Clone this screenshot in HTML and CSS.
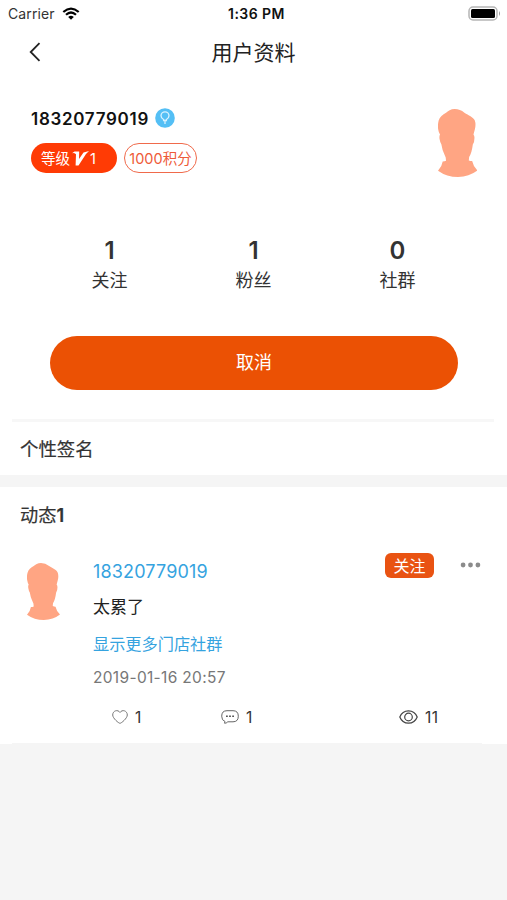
FILE: index.html
```html
<!DOCTYPE html>
<html lang="zh-CN">
<head>
<meta charset="utf-8">
<title>用户资料</title>
<link rel="stylesheet" href="styles.css">
</head>
<body>
<svg class="defs" width="0" height="0">
  <symbol id="avatar" viewBox="12 15 118 205" preserveAspectRatio="none">
    <path d="M62 15C50 15 42 21 36 26C26 32 17 38 14 50Q10 66 13 78Q14 86 18 92Q15 97 17 107Q18 115 22 121Q25 139 30 149L35 161L36 171Q32 173 26 173Q24 188 12 201Q38 220 72 220Q106 219 130 200Q118 190 114 172Q109 172 104 170L105 160Q113 147 116 122Q121 115 121 102Q121 96 118 92L122 77Q126 62 122 50C117 38 103 34 91 26Q78 15 62 15Z" fill="#ffa583"/>
  </symbol>
</svg>
<main class="page">
  <header class="status">
    <div class="carrier"><span>Carrier</span>
      <svg class="wifi" viewBox="0 0 18 13"><path d="M1.3 5Q9-1.8 16.7 5M4 7.8Q9 3.2 14 7.8" fill="none" stroke="#000" stroke-width="2.2"/><path d="M6.2 10Q9 7.7 11.8 10L9 12.8Z"/></svg>
    </div>
    <div class="time">1:36 PM</div>
    <svg class="battery" viewBox="0 0 33 15"><rect x="1" y="1" width="28" height="13" rx="4" fill="none" stroke="#b5b5b5" stroke-width="1.5"/><rect x="3" y="3" width="24" height="9" rx="1.5"/><path d="M31 5q2 2.5 0 5z" fill="#999"/></svg>
  </header>
  <nav class="nav">
    <svg class="back" viewBox="0 0 12 20"><path d="M10.5 1.2L1.7 10L10.5 18.8" fill="none" stroke="#222" stroke-width="1.8"/></svg>
    <h1>用户资料</h1>
  </nav>
  <section class="profile">
    <div>
      <div class="name"><span>18320779019</span>
        <svg class="bulb" viewBox="0 0 20 20"><circle cx="10" cy="10" r="9.8" fill="#54bff5"/><path d="M8.6 12.5V11.5Q6 10.2 6 7.8A4 4 0 0 1 14 7.8Q14 10.2 11.4 11.5V12.5ZM10 12.5v3.5" fill="none" stroke="#d8f2ff" stroke-width="1.3"/></svg>
      </div>
      <div class="chips">
        <span class="chip level"><span>等级</span><svg class="vee" viewBox="0 0 17 15"><path d="M0 2.2L2.5.5H7.2L7 8L11.5 1.5L17 0L14 3L6.5 14.5H3.6L4 3.3Q2.5 1.8 0 2.2Z" fill="#fff"/></svg><span>1</span></span>
        <span class="chip points">1000积分</span>
      </div>
    </div>
    <svg class="avatar-large"><use href="#avatar"/></svg>
  </section>
  <section class="stats">
    <div><b>1</b><span>关注</span></div>
    <div><b>1</b><span>粉丝</span></div>
    <div><b>0</b><span>社群</span></div>
  </section>
  <button class="cancel">取消</button>
  <section class="signature">个性签名</section>
  <h2 class="heading">动态<b>1</b></h2>
  <article class="post">
    <svg class="avatar-small"><use href="#avatar"/></svg>
    <div class="body">
      <div class="post-top">
        <span class="author">18320779019</span>
        <button class="follow">关注</button>
        <svg class="more" viewBox="0 0 20 6" fill="#8b8b8b"><circle cx="2.6" cy="3" r="2.4"/><circle cx="10" cy="3" r="2.4"/><circle cx="17.4" cy="3" r="2.4"/></svg>
      </div>
      <p class="text">太累了</p>
      <a class="communities">显示更多门店社群</a>
      <time class="date">2019-01-16 20:57</time>
      <div class="actions">
        <span class="like"><svg viewBox="0 0 16 14" width="16" height="14"><path d="M8 13.3C6.7 13.3.7 8.3.7 5C.7.5 6-.8 8 2.5C10-.8 15.3.5 15.3 5C15.3 8.3 9.3 13.3 8 13.3Z" fill="none" stroke="#777"/></svg><span>1</span></span>
        <span class="comment"><svg viewBox="0 0 18 14" width="18" height="14"><path d="M6 .7H12Q17.3 .7 17.3 6.2Q17.3 11.8 12 11.8H6.8Q5.2 13.5 3.5 13.2L4 11.5Q.7 10.5.7 6.2Q.7.7 6 .7Z" fill="none" stroke="#666"/><path d="M5 6.3h1.8m1.3 0h1.8m1.3 0h1.8" stroke="#555" stroke-width="1.6"/></svg><span>1</span></span>
        <span class="views"><svg viewBox="0 0 19 14" width="19" height="14" fill="none" stroke="#444" stroke-width="1.2"><path d="M.8 7C2.5 2.7 5.7.8 9.5.8S16.5 2.7 18.2 7C16.5 11.3 13.3 13.2 9.5 13.2S2.5 11.3.8 7Z"/><circle cx="9.5" cy="7" r="3.8"/></svg><span>11</span></span>
      </div>
    </div>
  </article>
</main>
</body>
</html>
```
FILE: styles.css
```css
* { box-sizing: border-box; }
body { margin: 0; background: #f5f5f5; color: #333; font-family: Inter, "Noto Sans CJK SC", sans-serif; }
svg { display: block; flex: none; }
.defs { position: absolute; }
h1, h2, p { margin: 0; }
button { border: 0; padding: 0; font-family: inherit; color: #fff; }
.page { height: 744px; background: linear-gradient(#f5f5f5, #f5f5f5) 12px 100% / 470px 1px no-repeat #fff; }

.status { display: grid; grid-template-columns: 1fr auto 1fr; align-items: center; height: 27px; padding: 0 6px 0 8px; color: #111; font-size: 14px; line-height: 27px; }
.carrier { display: flex; align-items: center; gap: 7px; letter-spacing: .1px; color: #333; }
.wifi { width: 18px; height: 13px; }
.time { font-weight: 600; letter-spacing: .45px; padding-left: 4px; }
.battery { width: 33px; height: 15px; justify-self: end; }

.nav { display: grid; grid-template-columns: 1fr auto 1fr; align-items: center; height: 50px; }
.back { width: 12px; height: 20px; margin-left: 29px; }
h1 { padding-top: 2px; font-size: 21px; line-height: 30px; font-weight: 400; color: #222; }

.profile { display: flex; justify-content: space-between; height: 154px; padding: 31px 30px 0 31px; }
.name { display: flex; align-items: center; gap: 6px; height: 20px; color: #111; font-size: 17px; line-height: 20px; font-weight: 600; letter-spacing: .7px; }
.name span { padding-top: 1px; }
.bulb { width: 20px; height: 20px; }
.chips { display: flex; gap: 7px; margin-top: 15px; }
.chip { display: flex; align-items: center; height: 30px; border-radius: 15px; font-size: 14.5px; line-height: 28px; }
.level { width: 86px; padding: 1px 0 0 10px; background: #ff3b05; color: #fff; }
.vee { width: 17px; height: 15px; margin: 0 1px 1px 2px; }
.points { width: 73px; padding-top: 1px; justify-content: center; border: 1.5px solid #f06a4b; color: #ee5b39; }
.avatar-large { width: 39.5px; height: 68px; margin-top: 1px; }

.stats { display: grid; grid-template-columns: repeat(3, 144px); justify-content: center; height: 105px; padding-top: 5px; }
.stats div { display: flex; flex-direction: column; align-items: center; }
.stats b { font-size: 24px; line-height: 30px; font-weight: 600; }
.stats span { font-size: 18px; line-height: 29px; }

.cancel { display: block; width: 408px; height: 54px; margin: 0 0 29px 50px; border-radius: 27px; background: #eb5104; font-size: 18px; line-height: 54px; }
.signature { height: 68px; border-bottom: 12px solid #f5f5f5; padding-left: 20px; font-size: 18.4px; line-height: 60px; background: linear-gradient(#f7f7f7, #f7f7f7) 12px 0 / 482px 3px no-repeat; }
.heading { height: 61px; padding-left: 20px; font-size: 18.2px; line-height: 56px; font-weight: 400; }
.heading b { font-weight: 600; }
.signature, .heading { -webkit-text-stroke: .2px #333; }

.post { display: flex; padding: 5px 26px 0 27px; }
.avatar-small { width: 33px; height: 57px; margin: 10px 33px 0 0; }
.body { flex: 1; display: flex; flex-direction: column; }
.post-top { display: flex; align-items: flex-start; height: 38px; }
.author { flex: 1; margin-top: 6px; font-size: 18px; line-height: 26px; letter-spacing: .15px; color: #35a3df; }
.follow { width: 49px; height: 25px; border-radius: 6px; background: #e95312; font-size: 16px; line-height: 24px; }
.more { width: 21px; height: 6px; margin: 9px 0 0 26px; }
.text { font-size: 17px; line-height: 32px; color: #222; }
.communities { font-size: 16.2px; line-height: 26px; margin-top: 8px; color: #35a3df; }
.date { margin-top: 9px; font-size: 15.5px; line-height: 24px; letter-spacing: .32px; color: #777; }
.actions { display: flex; height: 28px; margin-top: 13px; font-size: 15.5px; line-height: 28px; }
.actions > span { display: flex; align-items: center; gap: 7px; }
.actions span span { padding-top: 1px; }
.like { width: 109px; padding-left: 19px; }
.comment { width: 178px; padding-left: 19px; }
.views { padding-left: 19px; letter-spacing: .5px; }
```
